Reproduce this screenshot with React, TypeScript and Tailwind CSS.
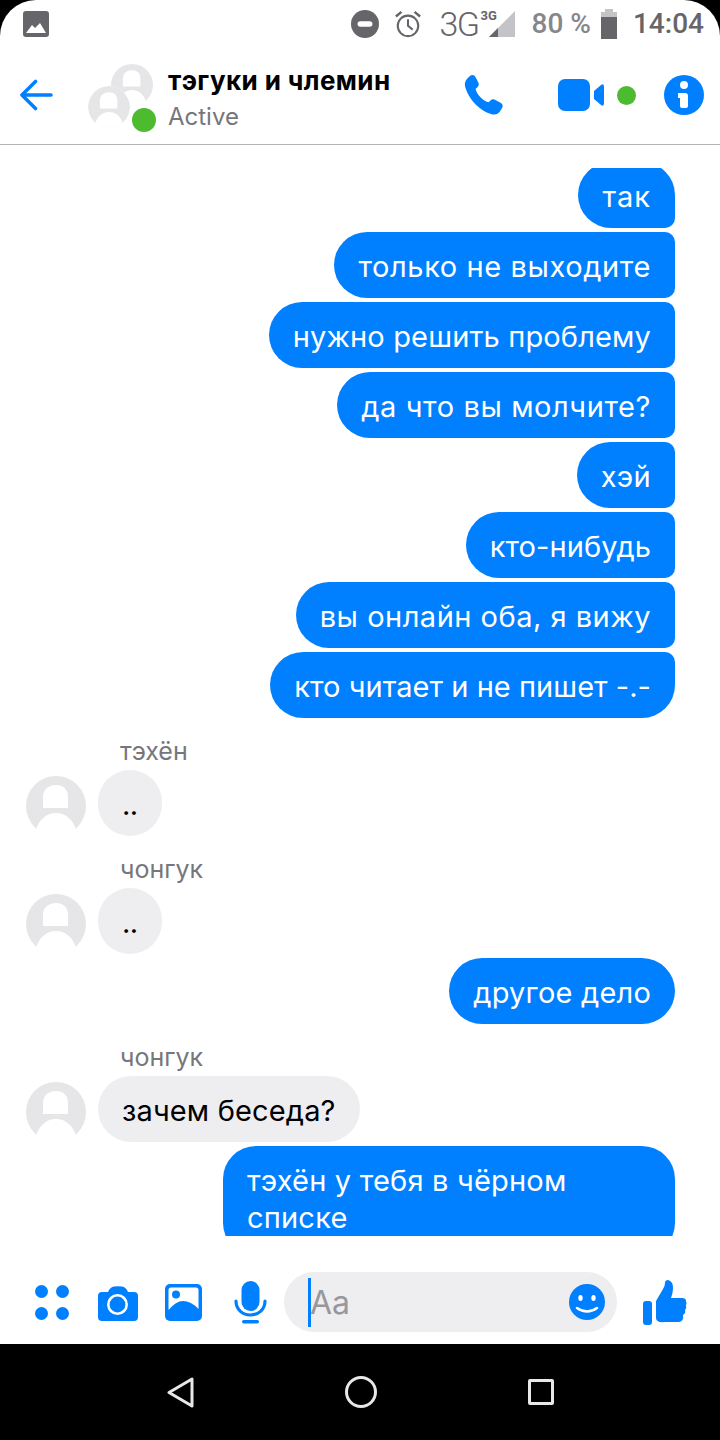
function Avatar({ className = "" }: { className?: string }) {
  return (
    <svg viewBox="0 0 60 60" className={className}>
      <circle cx="30" cy="30" r="30" fill="#e6e6e8" />
      <path d="M17 32 V21 C17 13 23 9 30 9 C37 9 42 13 42 21 V32 Z" fill="#fff" />
      <path d="M10 54 C13 43 21 37 30 37 C39 37 47 43 50 54 L50 61 H10 Z" fill="#fff" />
    </svg>
  );
}

function Out({ text, shape, spacing }: { text: string; shape: string; spacing: string }) {
  return (
    <div className={`h-[66px] self-end bg-[#0080ff] px-6 pt-[17px] text-[29px] leading-[36px] text-white ${shape} ${spacing}`}>
      {text}
    </div>
  );
}

function Incoming({ name, text, spacing }: { name: string; text: string; spacing: string }) {
  return (
    <div className="flex flex-col">
      <div className="pl-[120px] text-[25px] leading-[30px] text-[#77767b]">{name}</div>
      <div className="mt-[4px] flex items-end">
        <Avatar className="ml-[26px] mr-[12px] h-[60px] w-[60px]" />
        <div className={`h-[66px] min-w-[64px] rounded-[33px] bg-[#eeedf0] px-6 pt-[17px] text-[29px] leading-[36px] text-black ${spacing}`}>{text}</div>
      </div>
    </div>
  );
}

const MID = "rounded-l-[33px] rounded-r-[10px]";

export default function App() {
  return (
    <div className="h-[1440px] w-[720px] overflow-hidden bg-black font-['Inter','Liberation_Sans',sans-serif]">
      <div className="flex h-full flex-col rounded-t-[36px] bg-white">
        {/* status bar */}
        <div className="flex h-[54px] shrink-0 items-center pb-[6px] pl-[23px] pr-[16px] font-['Roboto','Liberation_Sans',sans-serif]">
          <svg viewBox="0 0 26 26" className="h-[26px] w-[26px]">
            <rect width="26" height="26" rx="3" fill="#66656a" />
            <path d="M3 22 L9 14 L12 17 L17 12 L23 22 Z" fill="#fff" />
          </svg>
          <div className="ml-auto flex items-center">
            <svg viewBox="0 0 30 30" className="h-[28px] w-[28px]">
              <circle cx="15" cy="15" r="15" fill="#66656a" />
              <rect x="7" y="12" width="16" height="6" rx="3" fill="#fff" />
            </svg>
            <svg viewBox="0 0 30 30" className="ml-[15px] h-[28px] w-[28px]" fill="none" stroke="#66656a" strokeWidth="2.2">
              <circle cx="15" cy="17" r="11" />
              <path d="M15 10 V17 L20 21" />
              <path d="M2 7 L8 2 M28 7 L22 2" strokeWidth="2.6" />
            </svg>
            <span className="ml-[17px] text-[34px] font-light leading-none tracking-[-1.5px] text-[#66656a]">3G</span>
            <div className="relative ml-[10px] h-[26px] w-[26px]">
              <span className="absolute left-[-8px] top-[-2px] text-[13px] font-bold leading-none text-[#66656a]">3G</span>
              <svg viewBox="0 0 26 26" className="h-[26px] w-[26px]">
                <path d="M26 0 V26 H0 Z" fill="#c4c3c7" />
                <path d="M0 26 L9 17 V26 Z" fill="#66656a" />
              </svg>
            </div>
            <span className="ml-[17px] text-[28px] font-medium leading-none text-[#87868b]">80 %</span>
            <svg viewBox="0 0 16 30" className="ml-[10px] h-[30px] w-[16px]">
              <path d="M4 0 H12 V3 H16 V30 H0 V3 H4 Z" fill="#c4c3c7" />
              <rect y="8" width="16" height="22" fill="#66656a" />
            </svg>
            <span className="ml-[16px] text-[28px] font-medium leading-none text-[#66656a]">14:04</span>
          </div>
        </div>

        {/* header */}
        <div className="flex h-[91px] shrink-0 items-center border-b border-[#b4b4b6] pb-[8px]">
          <svg viewBox="0 0 34 32" className="ml-[20px] h-[32px] w-[33px]" fill="none" stroke="#0080ff" strokeWidth="3.6" strokeLinecap="round" strokeLinejoin="round">
            <path d="M32 16 H3 M16 2 L2 16 L16 30" />
          </svg>
          <div className="relative ml-[35px] mt-[10px] h-[70px] w-[70px] shrink-0 self-start">
            <Avatar className="absolute left-[23px] top-0 h-[42px] w-[42px]" />
            <Avatar className="absolute left-0 top-[22px] h-[42px] w-[42px] rounded-full bg-white" />
            <div className="absolute left-[44px] top-[44px] h-[24px] w-[24px] rounded-full bg-[#4cbb2f]" />
          </div>
          <div className="ml-[10px] mt-[11px] flex flex-col self-start">
            <div className="text-[26px] font-bold leading-[32px] tracking-[0.4px] text-black">тэгуки и члемин</div>
            <div className="mt-[5px] text-[24px] leading-[30px] text-[#77767b]">Active</div>
          </div>
          <svg viewBox="0 0 24 24" className="ml-auto h-[44px] w-[44px]" fill="#0080ff">
            <path d="M5.2 1.4 C6.2 0.8 7.4 1.2 7.9 2.2 L9.5 5.3 C9.9 6.1 9.7 7 9.1 7.6 L7.9 8.7 C8.8 11.8 11.6 14.8 15 16 L16.2 14.9 C16.8 14.3 17.7 14.2 18.5 14.6 L21.8 16.4 C22.8 17 23 18.2 22.4 19.1 L21.2 21 C20.4 22.3 18.9 22.9 17.3 22.6 C10.6 21 4 14.3 2.2 7.2 C1.9 5.7 2.3 4.2 3.3 3.1 Z" />
          </svg>
          <svg viewBox="0 0 46 32" className="ml-[53px] h-[32px] w-[46px]" fill="#0080ff">
            <rect width="32" height="32" rx="7" />
            <path d="M36 12 L43 6 Q46 4 46 8 V24 Q46 28 43 26 L36 20 Z" />
          </svg>
          <div className="ml-[13px] h-[19px] w-[19px] rounded-full bg-[#4cbb2f]" />
          <svg viewBox="0 0 40 40" className="ml-[28px] mr-[16px] h-[40px] w-[40px]">
            <circle cx="20" cy="20" r="20" fill="#0080ff" />
            <circle cx="20" cy="10" r="4" fill="#fff" />
            <path d="M14 18 H21 Q24 18 24 21 V31 Q24 33 22 33 H18 Q16 33 16 31 V23 H14 Z" fill="#fff" />
          </svg>
        </div>

        {/* messages */}
        <div className="mt-[23px] flex h-[1068px] shrink-0 flex-col overflow-hidden pr-[45px]">
          <div className="-mt-[6px] flex shrink-0 flex-col gap-[4px]">
            <Out text="так" spacing="tracking-[1px]" shape="rounded-l-[33px] rounded-tr-[33px] rounded-br-[10px]" />
            <Out text="только не выходите" spacing="tracking-[0.6px]" shape={MID} />
            <Out text="нужно решить проблему" spacing="tracking-[0.15px]" shape={MID} />
            <Out text="да что вы молчите?" spacing="tracking-[0.6px]" shape={MID} />
            <Out text="хэй" spacing="tracking-[0.3px]" shape={MID} />
            <Out text="кто-нибудь" spacing="tracking-[0.1px]" shape={MID} />
            <Out text="вы онлайн оба, я вижу" spacing="tracking-[0.5px]" shape={MID} />
            <Out text="кто читает и не пишет -.-" spacing="tracking-[0.04px]" shape="rounded-l-[33px] rounded-tr-[10px] rounded-br-[33px]" />
          </div>
          <div className="mt-[18px] flex shrink-0 flex-col gap-[18px]">
            <Incoming name="тэхён" text=".." spacing="tracking-[-0.5px]" />
            <Incoming name="чонгук" text=".." spacing="tracking-[-0.5px]" />
          </div>
          <div className="mt-[4px] flex shrink-0 flex-col">
            <Out text="другое дело" spacing="tracking-[0.2px]" shape="rounded-[33px]" />
          </div>
          <div className="mt-[18px] shrink-0">
            <Incoming name="чонгук" text="зачем беседа?" spacing="tracking-[0.15px]" />
          </div>
          <div className="mt-[4px] h-[110px] w-[452px] shrink-0 self-end rounded-[33px] bg-[#0080ff] px-6 pt-[16px] text-[29px] leading-[37px] tracking-[0.2px] text-white">
            тэхён у тебя в чёрном
            <br />
            списке
          </div>
        </div>

        {/* composer */}
        <div className="flex h-[108px] shrink-0 items-center pt-[24px]">
          <svg viewBox="0 0 34 35" className="ml-[35px] h-[35px] w-[34px]" fill="#0080ff">
            <circle cx="6.5" cy="6.5" r="6.5" />
            <circle cx="27.5" cy="6.5" r="6.5" />
            <circle cx="6.5" cy="28.5" r="6.5" />
            <circle cx="27.5" cy="28.5" r="6.5" />
          </svg>
          <svg viewBox="0 0 40 35" className="ml-[29px] mt-[3px] h-[35px] w-[40px]">
            <path d="M4 6 H10 Q12 1 16 0.5 Q20 0 24 0.5 Q28 1 30 6 H36 Q40 6 40 10 V31 Q40 35 36 35 H4 Q0 35 0 31 V10 Q0 6 4 6 Z" fill="#0080ff" />
            <circle cx="19.5" cy="18.5" r="9.2" fill="none" stroke="#fff" strokeWidth="2.6" />
          </svg>
          <svg viewBox="0 0 37 37" className="ml-[27px] h-[37px] w-[37px]">
            <rect width="37" height="37" rx="5" fill="#0080ff" />
            <path d="M3.5 26 Q11 17 18 17 Q26 17 33.5 25 V6 Q33.5 3.5 31 3.5 H6 Q3.5 3.5 3.5 6 Z" fill="#fff" />
            <circle cx="11" cy="10.5" r="4" fill="#0080ff" />
          </svg>
          <svg viewBox="0 0 33 43" className="ml-[32px] h-[43px] w-[33px]">
            <rect x="7.5" y="0" width="18" height="30" rx="9" fill="#0080ff" />
            <path d="M2 20 C2 29 9 34 16.5 34 C24 34 31 29 31 20" fill="none" stroke="#0080ff" strokeWidth="3.2" strokeLinecap="round" />
            <rect x="8" y="39" width="17" height="3.5" rx="1.7" fill="#0080ff" />
          </svg>
          <div className="ml-[17px] flex h-[60px] w-[333px] items-center rounded-[30px] bg-[#eeedf0] pl-[24px] pr-[12px]">
            <div className="h-[49px] w-[3px] bg-[#0080ff]" />
            <span className="-ml-[1px] mt-[2px] text-[32px] leading-none text-[#98979c]">Aa</span>
            <svg viewBox="0 0 36 36" className="ml-auto h-[36px] w-[36px]">
              <circle cx="18" cy="18" r="18" fill="#0080ff" />
              <ellipse cx="11.5" cy="14" rx="2.2" ry="3" fill="#fff" />
              <ellipse cx="24.5" cy="14" rx="2.2" ry="3" fill="#fff" />
              <path d="M8 24 Q18 31 28 24" fill="none" stroke="#fff" strokeWidth="2.6" strokeLinecap="round" />
            </svg>
          </div>
          <svg viewBox="0 0 44 45" className="ml-[26px] h-[45px] w-[44px]" fill="#0080ff">
            <rect x="0" y="21" width="9" height="24" rx="3" />
            <path d="M13 21 L20 9 Q22 6 22 3 Q22 0 25 0 Q30 1 30 8 Q30 13 28 18 H39 Q43 18 43 21 Q44 23 43 25 Q44 28 42 30 Q43 33 40 35 Q41 41 36 42 H22 Q13 43 13 38 Z" />
          </svg>
        </div>

        {/* nav */}
        <div className="flex h-[96px] shrink-0 items-center justify-center bg-black">
          <svg viewBox="0 0 27 31" className="h-[31px] w-[27px]" fill="none" stroke="#e8e8e8" strokeWidth="3" strokeLinejoin="round">
            <path d="M25 2 V29 L2 15.5 Z" />
          </svg>
          <div className="ml-[151px] h-[32px] w-[32px] rounded-full border-[3px] border-[#e8e8e8]" />
          <div className="ml-[151px] h-[26px] w-[26px] rounded-[2px] border-[3px] border-[#e8e8e8]" />
        </div>
      </div>
    </div>
  );
}
